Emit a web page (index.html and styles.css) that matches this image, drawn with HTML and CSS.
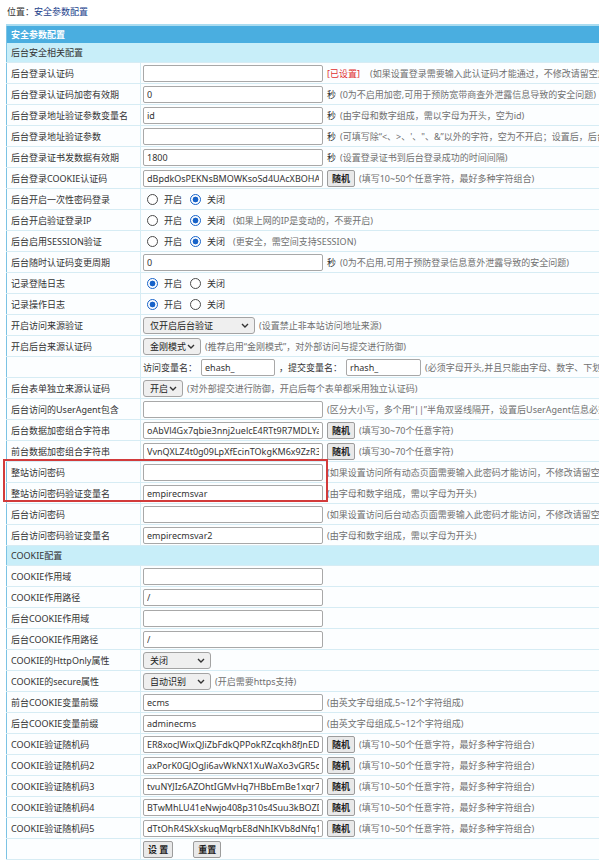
FILE: index.html
```html
<!DOCTYPE html>
<html lang="zh-CN">
<head>
<meta charset="utf-8">
<title>安全参数配置</title>
<link rel="stylesheet" href="styles.css">
</head>
<body>
<div class="page">
  <div class="crumb">位置：<a href="#">安全参数配置</a></div>
  <table class="cfg">
    <colgroup><col class="c1"><col class="c2"></colgroup>
    <tr class="head"><td colspan="2">安全参数配置</td></tr>
    <tr class="sub"><td colspan="2">后台安全相关配置</td></tr>
    <tr><td class="lbl">后台登录认证码</td><td><div class="cell"><input class="txt" type="text"><span class="red">[已设置]</span><span class="note wide">(如果设置登录需要输入此认证码才能通过，不修改请留空)</span></div></td></tr>
    <tr><td class="lbl">后台登录认证码加密有效期</td><td><div class="cell"><input class="txt" type="text" value="0"><span>秒</span><span class="note">(0为不启用加密,可用于预防宽带商查外泄露信息导致的安全问题)</span></div></td></tr>
    <tr><td class="lbl">后台登录地址验证参数变量名</td><td><div class="cell"><input class="txt" type="text" value="id"><span>秒</span><span class="note">(由字母和数字组成，需以字母为开头，空为id)</span></div></td></tr>
    <tr><td class="lbl">后台登录地址验证参数</td><td><div class="cell"><input class="txt" type="text"><span>秒</span><span class="note">(可填写除“&lt;、&gt;、'、"、&amp;”以外的字符，空为不开启；设置后，后台登录地址需加上此参数)</span></div></td></tr>
    <tr><td class="lbl">后台登录证书发数据有效期</td><td><div class="cell"><input class="txt" type="text" value="1800"><span>秒</span><span class="note">(设置登录证书到后台登录成功的时间间隔)</span></div></td></tr>
    <tr><td class="lbl">后台登录COOKIE认证码</td><td><div class="cell"><input class="txt" type="text" value="dBpdkOsPEKNsBMOWKsoSd4UAcXBOHAQ"><button class="btn" type="button">随机</button><span class="note">(填写10~50个任意字符，最好多种字符组合)</span></div></td></tr>
    <tr><td class="lbl">后台开启一次性密码登录</td><td><div class="cell radios"><label class="opt"><input type="radio" name="r1">开启</label><label class="opt"><input type="radio" name="r1" checked>关闭</label></div></td></tr>
    <tr><td class="lbl">后台开启验证登录IP</td><td><div class="cell radios"><label class="opt"><input type="radio" name="r2">开启</label><label class="opt"><input type="radio" name="r2" checked>关闭</label><span class="note">(如果上网的IP是变动的，不要开启)</span></div></td></tr>
    <tr><td class="lbl">后台启用SESSION验证</td><td><div class="cell radios"><label class="opt"><input type="radio" name="r3">开启</label><label class="opt"><input type="radio" name="r3" checked>关闭</label><span class="note">(更安全，需空间支持SESSION)</span></div></td></tr>
    <tr><td class="lbl">后台随时认证码变更周期</td><td><div class="cell"><input class="txt" type="text" value="0"><span>秒</span><span class="note">(0为不启用,可用于预防登录信息意外泄露导致的安全问题)</span></div></td></tr>
    <tr><td class="lbl">记录登陆日志</td><td><div class="cell radios"><label class="opt"><input type="radio" name="r4" checked>开启</label><label class="opt"><input type="radio" name="r4">关闭</label></div></td></tr>
    <tr><td class="lbl">记录操作日志</td><td><div class="cell radios"><label class="opt"><input type="radio" name="r5" checked>开启</label><label class="opt"><input type="radio" name="r5">关闭</label></div></td></tr>
    <tr><td class="lbl">开启访问来源验证</td><td><div class="cell"><span class="sel w112">仅开启后台验证<svg class="chev" viewBox="0 0 8 5"><polyline points="1,1 4,4 7,1"/></svg></span><span class="note">(设置禁止非本站访问地址来源)</span></div></td></tr>
    <tr><td class="lbl">开启后台来源认证码</td><td><div class="cell"><span class="sel w58">金刚模式<svg class="chev" viewBox="0 0 8 5"><polyline points="1,1 4,4 7,1"/></svg></span><span class="note">(推荐启用“金刚模式”，对外部访问与提交进行防御)</span></div></td></tr>
    <tr><td class="lbl"></td><td><div class="cell"><span>访问变量名：</span><input class="txt w74" type="text" value="ehash_"><span>，提交变量名：</span><input class="txt w75" type="text" value="rhash_"><span class="note">(必须字母开头,并且只能由字母、数字、下划线组成)</span></div></td></tr>
    <tr><td class="lbl">后台表单独立来源认证码</td><td><div class="cell"><span class="sel w40">开启<svg class="chev" viewBox="0 0 8 5"><polyline points="1,1 4,4 7,1"/></svg></span><span class="note">(对外部提交进行防御，开启后每个表单都采用独立认证码)</span></div></td></tr>
    <tr><td class="lbl">后台访问的UserAgent包含</td><td><div class="cell"><input class="txt" type="text"><span class="note">(区分大小写，多个用“||”半角双竖线隔开，设置后UserAgent信息必须包含其中之一才能访问)</span></div></td></tr>
    <tr><td class="lbl">后台数据加密组合字符串</td><td><div class="cell"><input class="txt" type="text" value="oAbVl4Gx7qbie3nnj2uelcE4RTt9R7MDLYaVk2"><button class="btn" type="button">随机</button><span class="note">(填写30~70个任意字符)</span></div></td></tr>
    <tr><td class="lbl">前台数据加密组合字符串</td><td><div class="cell"><input class="txt" type="text" value="VvnQXLZ4t0g09LpXfEcinTOkgKM6x9ZzR3"><button class="btn" type="button">随机</button><span class="note">(填写30~70个任意字符)</span></div></td></tr>
    <tr><td class="lbl">整站访问密码</td><td><div class="cell"><input class="txt" type="text"><span class="note">(如果设置访问所有动态页面需要输入此密码才能访问，不修改请留空)</span></div></td></tr>
    <tr><td class="lbl">整站访问密码验证变量名</td><td><div class="cell"><input class="txt" type="text" value="empirecmsvar"><span class="note">(由字母和数字组成，需以字母为开头)</span></div></td></tr>
    <tr><td class="lbl">后台访问密码</td><td><div class="cell"><input class="txt" type="text"><span class="note">(如果设置访问后台动态页面需要输入此密码才能访问，不修改请留空)</span></div></td></tr>
    <tr><td class="lbl">后台访问密码验证变量名</td><td><div class="cell"><input class="txt" type="text" value="empirecmsvar2"><span class="note">(由字母和数字组成，需以字母为开头)</span></div></td></tr>
    <tr class="sub"><td colspan="2">COOKIE配置</td></tr>
    <tr><td class="lbl">COOKIE作用域</td><td><div class="cell"><input class="txt" type="text"></div></td></tr>
    <tr><td class="lbl">COOKIE作用路径</td><td><div class="cell"><input class="txt" type="text" value="/"></div></td></tr>
    <tr><td class="lbl">后台COOKIE作用域</td><td><div class="cell"><input class="txt" type="text"></div></td></tr>
    <tr><td class="lbl">后台COOKIE作用路径</td><td><div class="cell"><input class="txt" type="text" value="/"></div></td></tr>
    <tr><td class="lbl">COOKIE的HttpOnly属性</td><td><div class="cell"><span class="sel w68">关闭<svg class="chev" viewBox="0 0 8 5"><polyline points="1,1 4,4 7,1"/></svg></span></div></td></tr>
    <tr><td class="lbl">COOKIE的secure属性</td><td><div class="cell"><span class="sel w68">自动识别<svg class="chev" viewBox="0 0 8 5"><polyline points="1,1 4,4 7,1"/></svg></span><span class="note">(开启需要https支持)</span></div></td></tr>
    <tr><td class="lbl">前台COOKIE变量前缀</td><td><div class="cell"><input class="txt" type="text" value="ecms"><span class="note">(由英文字母组成,5~12个字符组成)</span></div></td></tr>
    <tr><td class="lbl">后台COOKIE变量前缀</td><td><div class="cell"><input class="txt" type="text" value="adminecms"><span class="note">(由英文字母组成,5~12个字符组成)</span></div></td></tr>
    <tr><td class="lbl">COOKIE验证随机码</td><td><div class="cell"><input class="txt" type="text" value="ER8xocJWixQJiZbFdkQPPokRZcqkh8fJnEDq"><button class="btn" type="button">随机</button><span class="note">(填写10~50个任意字符，最好多种字符组合)</span></div></td></tr>
    <tr><td class="lbl">COOKIE验证随机码2</td><td><div class="cell"><input class="txt" type="text" value="axPorK0GJOgJi6avWkNX1XuWaXo3vGR5oe"><button class="btn" type="button">随机</button><span class="note">(填写10~50个任意字符，最好多种字符组合)</span></div></td></tr>
    <tr><td class="lbl">COOKIE验证随机码3</td><td><div class="cell"><input class="txt" type="text" value="tvuNYJIz6AZOhtIGMvHq7HBbEmBe1xqr79"><button class="btn" type="button">随机</button><span class="note">(填写10~50个任意字符，最好多种字符组合)</span></div></td></tr>
    <tr><td class="lbl">COOKIE验证随机码4</td><td><div class="cell"><input class="txt" type="text" value="BTwMhLU41eNwjo408p310s4Suu3kBOZD"><button class="btn" type="button">随机</button><span class="note">(填写10~50个任意字符，最好多种字符组合)</span></div></td></tr>
    <tr><td class="lbl">COOKIE验证随机码5</td><td><div class="cell"><input class="txt" type="text" value="dTtOhR4SkXskuqMqrbE8dNhIKVb8dNfq1V"><button class="btn" type="button">随机</button><span class="note">(填写10~50个任意字符，最好多种字符组合)</span></div></td></tr>
    <tr><td class="lbl"></td><td><div class="cell actions"><button class="btn" type="submit">设 置</button><button class="btn" type="reset">重置</button></div></td></tr>
  </table>
  <div class="mark"></div>
</div>
</body>
</html>
```

FILE: styles.css
```css
html, body {
  margin: 0;
  padding: 0;
  overflow: hidden;
  background: #fff;
}
body {
  font-family: "Noto Sans", "Noto Sans CJK SC", sans-serif;
  font-size: 9px;
  color: #333;
}
.page {
  position: relative;
  width: 599px;
  height: 862px;
  overflow: hidden;
}
.crumb {
  height: 24px;
  line-height: 24px;
  padding-left: 7px;
  color: #333;
}
.crumb a {
  color: #1d3f8c;
  text-decoration: none;
}
table.cfg {
  margin-left: 6px;
  width: 1000px;
  table-layout: fixed;
  border-collapse: collapse;
  border-top: 2px solid #aadcf0;
  border-left: 1px solid #7cc3e4;
}
.cfg col.c1 { width: 134px; }
.cfg td {
  height: 20px;
  padding: 0;
  border-bottom: 1px solid #d6ecf4;
  background: #fcfeff;
  white-space: nowrap;
  overflow: hidden;
  vertical-align: middle;
}
.cfg td.lbl {
  padding-left: 4px;
  border-right: 1px solid #d6ecf4;
}
.cfg tr.head td {
  height: 17px;
  padding-left: 4px;
  background: #4aaee0;
  color: #fff;
  font-weight: bold;
  border-bottom: none;
}
.cfg tr.sub td {
  height: 19px;
  padding-left: 4px;
  background: #c8eef9;
  color: #333;
}
.cell {
  display: flex;
  align-items: center;
  gap: 4px;
  padding-left: 2px;
}
.txt {
  box-sizing: border-box;
  width: 180px;
  height: 17px;
  margin: 0;
  padding: 0 3px;
  border: 1px solid #a8a8a8;
  border-radius: 2px;
  background: #fff;
  font-family: "Noto Sans", "Noto Sans CJK SC", sans-serif;
  font-size: 9px;
  color: #333;
  flex: none;
}
.txt.w74 { width: 74px; }
.txt.w75 { width: 75px; }
.red { color: #e03030; }
.note { color: #707070; }
.note.wide { margin-left: 6px; }
.btn {
  box-sizing: border-box;
  height: 17px;
  margin: 0;
  padding: 0 4px;
  border: 1px solid #9c9c9c;
  border-radius: 2px;
  background: #e9e9e9;
  font-family: "Noto Sans", "Noto Sans CJK SC", sans-serif;
  font-size: 9px;
  font-weight: bold;
  color: #222;
  line-height: 15px;
  flex: none;
}
.actions { gap: 20px; }
.radios { gap: 8px; padding-left: 6px; }
.opt {
  display: inline-flex;
  align-items: center;
  gap: 6px;
}
.opt input {
  appearance: none;
  -webkit-appearance: none;
  box-sizing: border-box;
  width: 11px;
  height: 11px;
  margin: 0;
  border: 1px solid #4a4a4a;
  border-radius: 50%;
  background: #fff;
}
.opt input:checked {
  border-color: #1763c9;
  background: radial-gradient(circle, #1763c9 0 2.6px, #fff 3.2px);
}
.sel {
  box-sizing: border-box;
  display: inline-flex;
  align-items: center;
  justify-content: space-between;
  height: 17px;
  padding: 0 5px 0 6px;
  border: 1px solid #a3a3a3;
  border-radius: 3px;
  background: #efefef;
  color: #222;
  flex: none;
}
.sel.w112 { width: 112px; }
.sel.w58 { width: 58px; }
.sel.w40 { width: 40px; }
.sel.w68 { width: 68px; }
.chev {
  width: 8px;
  height: 5px;
  fill: none;
  stroke: #333;
  stroke-width: 1.4;
}
.mark {
  position: absolute;
  left: 3px;
  top: 459px;
  width: 325px;
  height: 43px;
  box-sizing: border-box;
  border: 2px solid #d23b3b;
}
```
